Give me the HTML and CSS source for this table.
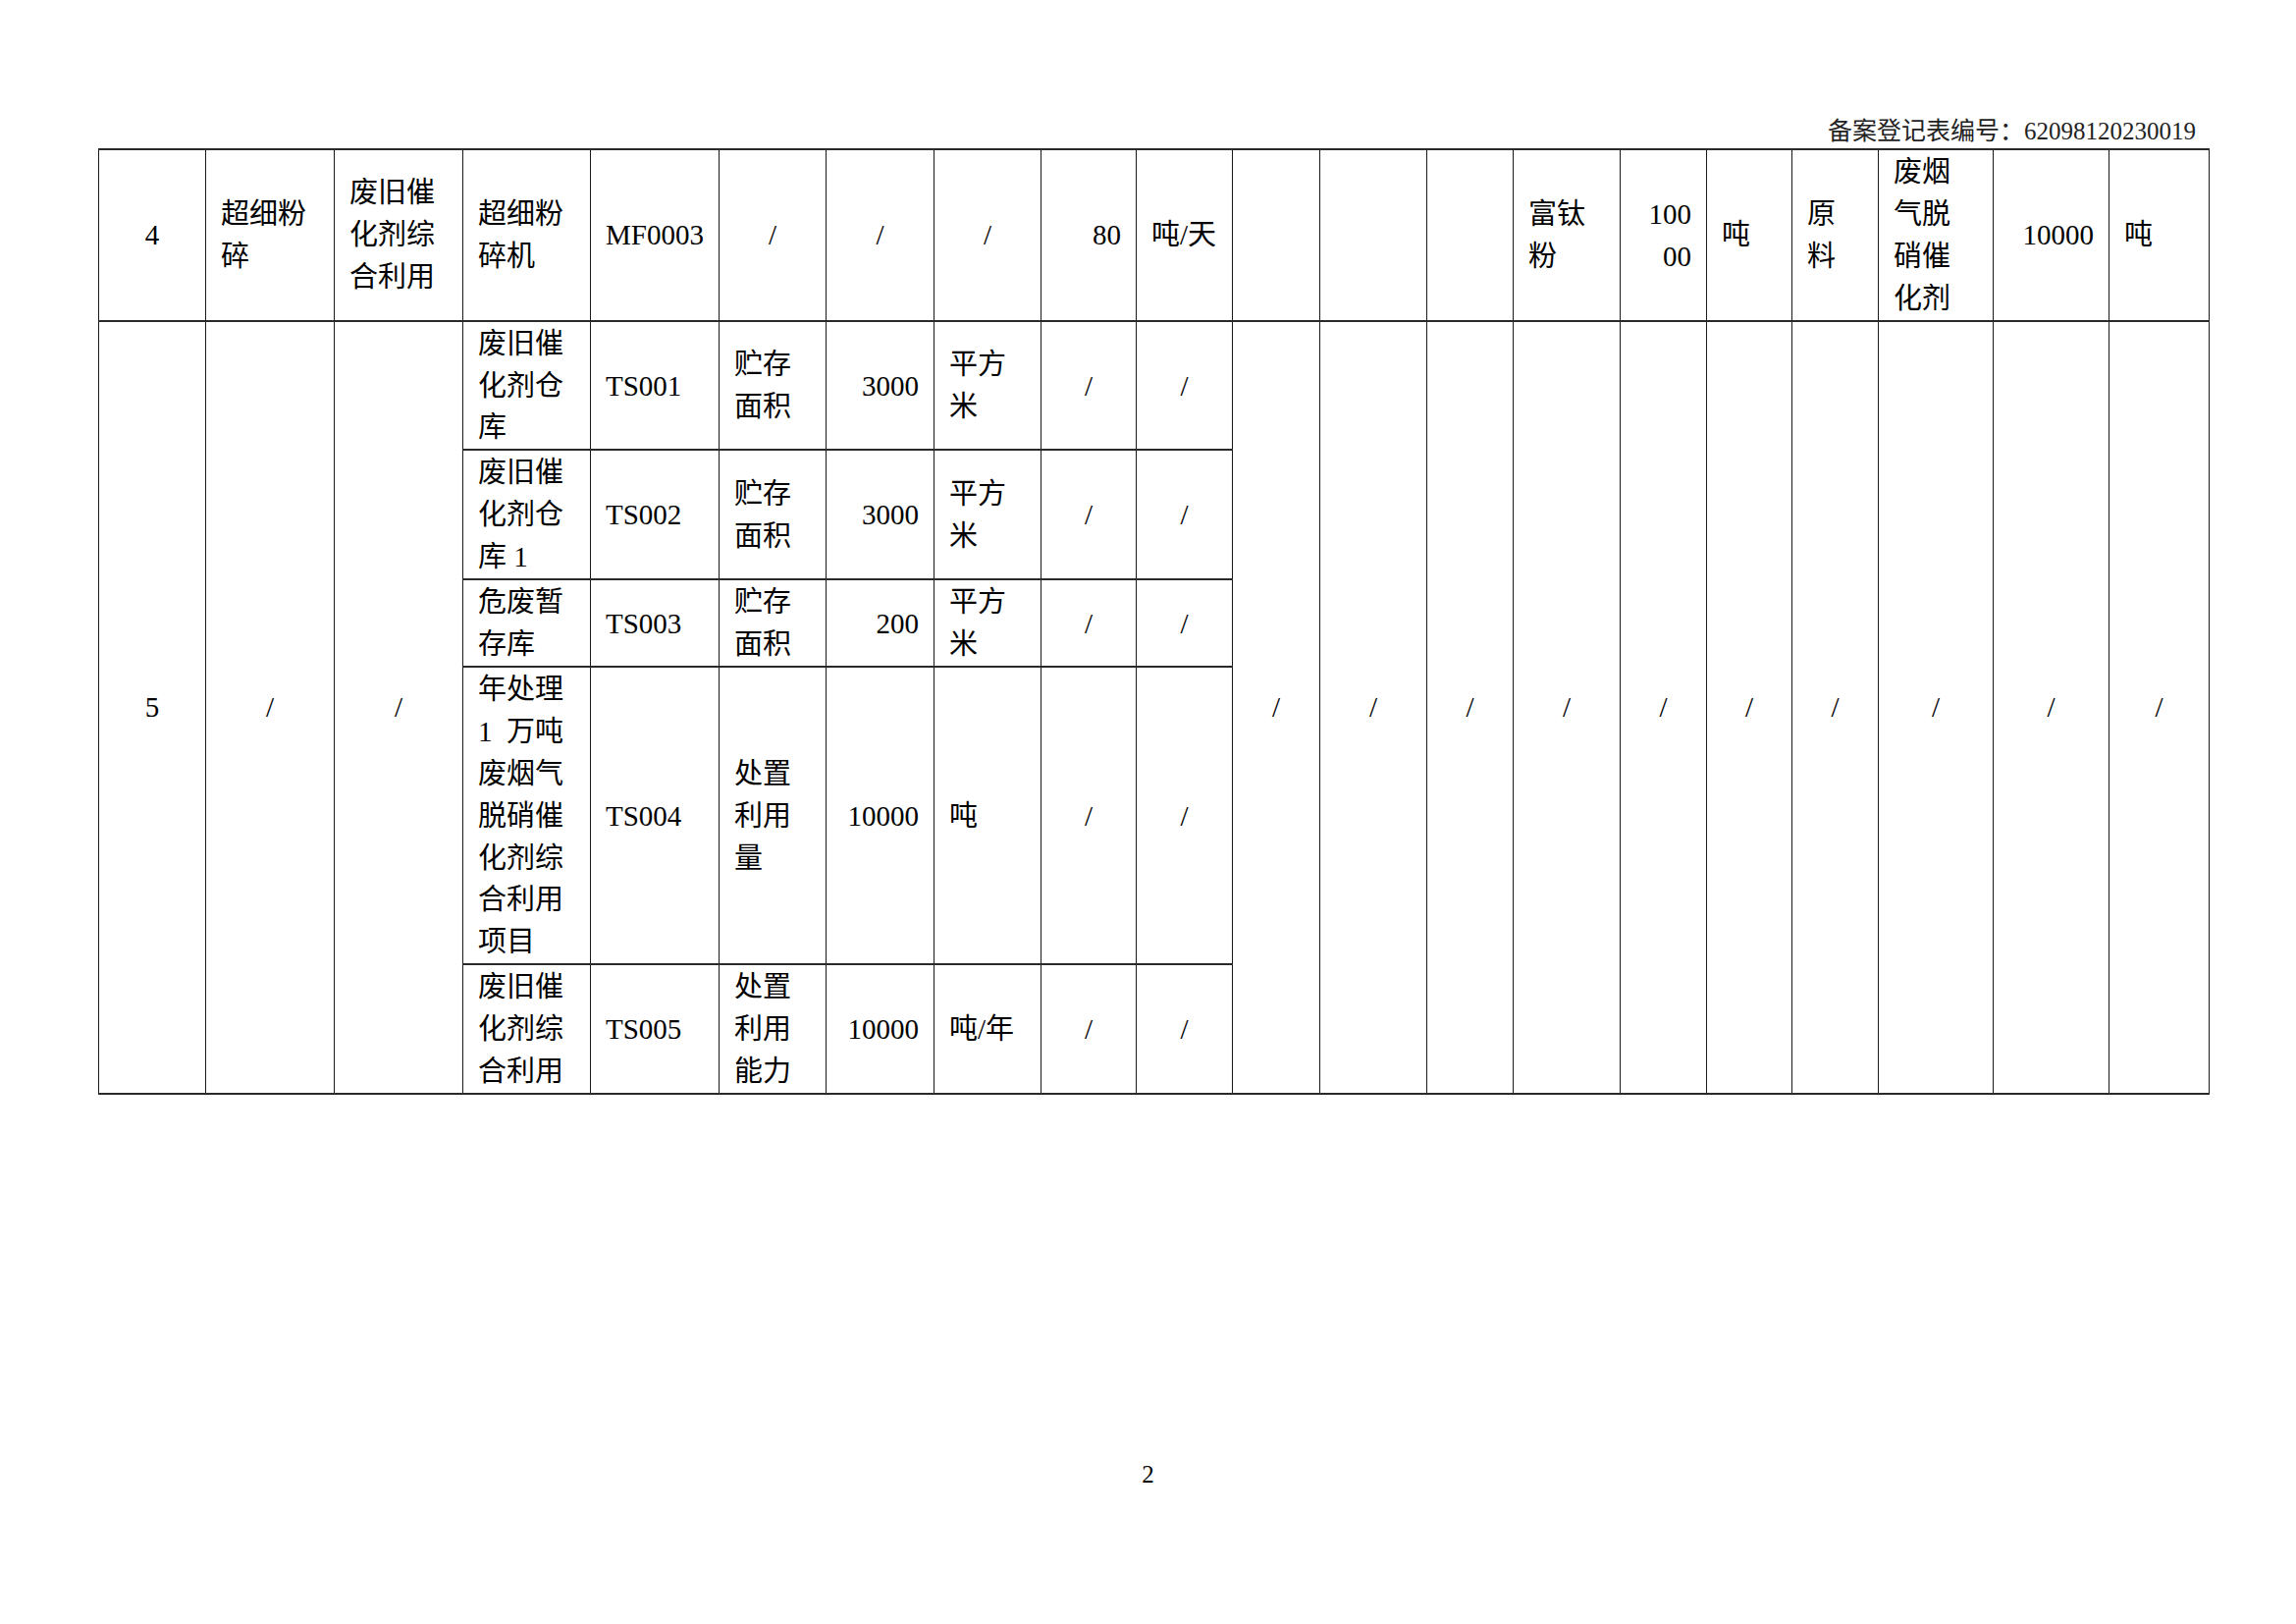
FILE: index.html
```html
<!DOCTYPE html>
<html lang="zh-CN">
<head>
<meta charset="utf-8">
<title>备案登记表</title>
<link rel="stylesheet" href="styles.css">
</head>
<body>
<div class="page">
  <div class="doc-no">备案登记表编号：62098120230019</div>
  <table class="grid">
    <colgroup>
      <col class="c1"><col class="c2"><col class="c3"><col class="c4"><col class="c5">
      <col class="c6"><col class="c7"><col class="c8"><col class="c9"><col class="c10">
      <col class="c11"><col class="c12"><col class="c13"><col class="c14"><col class="c15">
      <col class="c16"><col class="c17"><col class="c18"><col class="c19"><col class="c20">
    </colgroup>
    <tbody>
      <tr>
        <td class="c">4</td>
        <td>超细粉<br>碎</td>
        <td>废旧催<br>化剂综<br>合利用</td>
        <td>超细粉<br>碎机</td>
        <td>MF0003</td>
        <td class="c">/</td>
        <td class="c">/</td>
        <td class="c">/</td>
        <td class="r">80</td>
        <td>吨/天</td>
        <td></td>
        <td></td>
        <td></td>
        <td>富钛<br>粉</td>
        <td class="r">100<br>00</td>
        <td>吨</td>
        <td>原<br>料</td>
        <td>废烟<br>气脱<br>硝催<br>化剂</td>
        <td class="r">10000</td>
        <td>吨</td>
      </tr>
      <tr>
        <td class="c" rowspan="5">5</td>
        <td class="c" rowspan="5">/</td>
        <td class="c" rowspan="5">/</td>
        <td>废旧催<br>化剂仓<br>库</td>
        <td>TS001</td>
        <td>贮存<br>面积</td>
        <td class="r">3000</td>
        <td>平方<br>米</td>
        <td class="c">/</td>
        <td class="c">/</td>
        <td class="c" rowspan="5">/</td>
        <td class="c" rowspan="5">/</td>
        <td class="c" rowspan="5">/</td>
        <td class="c" rowspan="5">/</td>
        <td class="c" rowspan="5">/</td>
        <td class="c" rowspan="5">/</td>
        <td class="c" rowspan="5">/</td>
        <td class="c" rowspan="5">/</td>
        <td class="c" rowspan="5">/</td>
        <td class="c" rowspan="5">/</td>
      </tr>
      <tr>
        <td>废旧催<br>化剂仓<br>库 1</td>
        <td>TS002</td>
        <td>贮存<br>面积</td>
        <td class="r">3000</td>
        <td>平方<br>米</td>
        <td class="c">/</td>
        <td class="c">/</td>
      </tr>
      <tr>
        <td>危废暂<br>存库</td>
        <td>TS003</td>
        <td>贮存<br>面积</td>
        <td class="r">200</td>
        <td>平方<br>米</td>
        <td class="c">/</td>
        <td class="c">/</td>
      </tr>
      <tr>
        <td>年处理<br>1&ensp;万吨<br>废烟气<br>脱硝催<br>化剂综<br>合利用<br>项目</td>
        <td>TS004</td>
        <td>处置<br>利用<br>量</td>
        <td class="r">10000</td>
        <td>吨</td>
        <td class="c">/</td>
        <td class="c">/</td>
      </tr>
      <tr>
        <td>废旧催<br>化剂综<br>合利用</td>
        <td>TS005</td>
        <td>处置<br>利用<br>能力</td>
        <td class="r">10000</td>
        <td>吨/年</td>
        <td class="c">/</td>
        <td class="c">/</td>
      </tr>
    </tbody>
  </table>
  <div class="page-no">2</div>
</div>
</body>
</html>
```
FILE: styles.css
```css
html, body {
  margin: 0;
  padding: 0;
  background: #ffffff;
}

.page {
  width: 2339px;
  height: 1654px;
  box-sizing: border-box;
  padding: 117px 89px 0 100px;
  font-family: "Liberation Serif", "Noto Sans CJK SC", serif;
  color: #000;
}

.doc-no {
  text-align: right;
  padding-right: 13px;
  font-size: 25px;
  line-height: 34px;
  height: 34px;
  color: #222;
}

.grid {
  border-collapse: collapse;
  table-layout: fixed;
  width: 2150px;
}

.grid td {
  border-left: 1px solid #1a1a1a;
  border-right: 1px solid #1a1a1a;
  border-top: 2px solid #2a2a2a;
  border-bottom: 2px solid #2a2a2a;
  padding: 1px 15px 0;
  font-size: 29px;
  line-height: 42.9px;
  vertical-align: middle;
  text-align: left;
  white-space: nowrap;
  overflow: hidden;
}

.grid td.c { text-align: center; }
.grid td.r { text-align: right; }

.c1 { width: 109px; }
.c2 { width: 131px; }
.c3 { width: 131px; }
.c4 { width: 130px; }
.c5 { width: 131px; }
.c6 { width: 109px; }
.c7 { width: 110px; }
.c8 { width: 109px; }
.c9 { width: 97px; }
.c10 { width: 98px; }
.c11 { width: 89px; }
.c12 { width: 109px; }
.c13 { width: 88px; }
.c14 { width: 109px; }
.c15 { width: 88px; }
.c16 { width: 87px; }
.c17 { width: 88px; }
.c18 { width: 117px; }
.c19 { width: 118px; }
.c20 { width: 102px; }

.page-no {
  margin-top: 370px;
  margin-left: -100px;
  width: 2339px;
  text-align: center;
  font-size: 25px;
  line-height: 34px;
}
```
